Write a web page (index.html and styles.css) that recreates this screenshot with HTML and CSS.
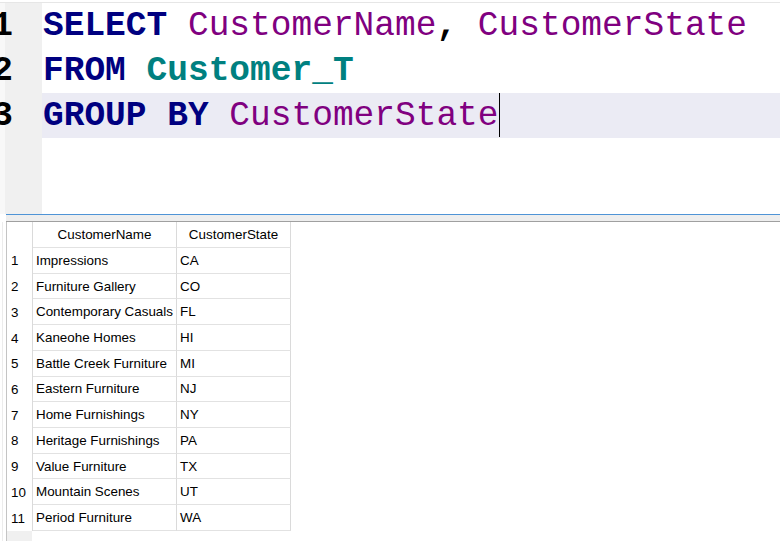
FILE: index.html
```html
<!DOCTYPE html>
<html>
<head>
<meta charset="utf-8">
<link rel="stylesheet" href="styles.css">
</head>
<body>
<div class="editor">
  <div class="line">
    <div class="gutter"><span>1</span></div>
    <div class="code"><span class="kw">SELECT</span> <span class="id">CustomerName</span><span class="punc">,</span> <span class="id">CustomerState</span></div>
  </div>
  <div class="line">
    <div class="gutter"><span>2</span></div>
    <div class="code"><span class="kw">FROM</span> <span class="tbl">Customer_T</span></div>
  </div>
  <div class="line current">
    <div class="gutter"><span>3</span></div>
    <div class="code"><span class="kw">GROUP BY</span> <span class="id">CustomerState</span><span class="caret"></span></div>
  </div>
  <div class="line filler">
    <div class="gutter"></div>
    <div class="code"></div>
  </div>
</div>
<div class="splitter"></div>
<div class="results">
  <div class="pane">
    <div class="grid">
      <div class="c rn"></div><div class="c h">CustomerName</div><div class="c h">CustomerState</div>
      <div class="c rn">1</div><div class="c">Impressions</div><div class="c">CA</div>
      <div class="c rn">2</div><div class="c">Furniture Gallery</div><div class="c">CO</div>
      <div class="c rn">3</div><div class="c">Contemporary Casuals</div><div class="c">FL</div>
      <div class="c rn">4</div><div class="c">Kaneohe Homes</div><div class="c">HI</div>
      <div class="c rn">5</div><div class="c">Battle Creek Furniture</div><div class="c">MI</div>
      <div class="c rn">6</div><div class="c">Eastern Furniture</div><div class="c">NJ</div>
      <div class="c rn">7</div><div class="c">Home Furnishings</div><div class="c">NY</div>
      <div class="c rn">8</div><div class="c">Heritage Furnishings</div><div class="c">PA</div>
      <div class="c rn">9</div><div class="c">Value Furniture</div><div class="c">TX</div>
      <div class="c rn">10</div><div class="c">Mountain Scenes</div><div class="c">UT</div>
      <div class="c rn">11</div><div class="c">Period Furniture</div><div class="c">WA</div>
    </div>
  </div>
</div>
</body>
</html>
```
FILE: styles.css
```css
html, body {
  margin: 0;
  padding: 0;
}
body {
  width: 780px;
  height: 541px;
  overflow: hidden;
  background: #ffffff;
  font-family: "Liberation Sans", Arial, sans-serif;
}
.editor {
  margin-top: 2px;
  border-top: 1px solid #e6e6e6;
  height: 211px;
  display: flex;
  flex-direction: column;
}
.line {
  display: flex;
  height: 45px;
  flex: none;
}
.line.filler {
  flex: 1;
}
.gutter {
  width: 42px;
  flex: none;
  box-sizing: border-box;
  padding-top: 1px;
  padding-right: 29px;
  background: #f0f0f0;
  box-shadow: inset 5px 0 #f8f8f8;
  display: flex;
  justify-content: flex-end;
  overflow: hidden;
  font: bold 34.5px/44px "Liberation Mono", "Courier New", monospace;
  color: #000;
}
.code {
  flex: 1;
  box-sizing: border-box;
  padding-top: 1px;
  padding-left: 1px;
  font: 34.5px/44px "Liberation Mono", "Courier New", monospace;
  white-space: pre;
  color: #000;
}
.line.current .code {
  background: #ebebf4;
}
.kw {
  color: #000080;
  font-weight: bold;
}
.id {
  color: #800080;
}
.tbl {
  color: #008080;
  font-weight: bold;
}
.punc {
  color: #000;
  font-weight: bold;
}
.caret {
  display: inline-block;
  width: 0;
  height: 44px;
  margin-top: -1px;
  border-left: 1px solid #000;
  vertical-align: top;
}
.splitter {
  margin-left: 6px;
  height: 6px;
  border-top: 1px solid #4f94d6;
  border-bottom: 1px solid #a0a0a0;
  background: #eeeeee;
}
.results {
  height: 319px;
  margin-left: 2px;
  border-left: 1px solid #ececec;
  padding-left: 3px;
  display: flex;
}
.pane {
  flex: 1;
  border-left: 1px solid #c4c4c4;
  background: linear-gradient(#f0f0f0, #f0f0f0) no-repeat 0 0 / 25px 100%;
}
.grid {
  display: grid;
  grid-template-columns: 26px 144px 114px;
  grid-template-rows: 26px repeat(11, 25.73px);
}
.c {
  box-sizing: border-box;
  border-right: 1px solid #dadada;
  border-bottom: 1px solid #e2e2e2;
  background: #ffffff;
  display: flex;
  align-items: center;
  padding-left: 3px;
  font-size: 13.4px;
  color: #000;
  white-space: nowrap;
  overflow: hidden;
}
.c.rn {
  border-bottom: none;
  padding-left: 4px;
}
.c.h {
  justify-content: center;
  padding-left: 0;
  color: #000;
}
```
